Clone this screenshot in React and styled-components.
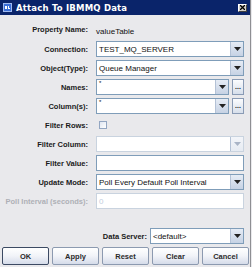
import React from 'react'
import styled, { createGlobalStyle, css } from 'styled-components'

const GlobalStyle = createGlobalStyle`
  html, body {
    margin: 0;
    padding: 0;
    background: #e9e9ec;
  }
  body {
    font-family: "Liberation Sans", Arial, sans-serif;
  }
`

const rows = [
  { label: 'Connection:', kind: 'combo', value: 'TEST_MQ_SERVER' },
  { label: 'Object(Type):', kind: 'combo', value: 'Queue Manager' },
  { label: 'Names:', kind: 'combo', value: '*', browse: true },
  { label: 'Column(s):', kind: 'combo', value: '*', browse: true },
  { label: 'Filter Rows:', kind: 'check' },
  { label: 'Filter Column:', kind: 'combo', value: '', disabled: true },
  { label: 'Filter Value:', kind: 'text', value: '' },
  { label: 'Update Mode:', kind: 'combo', value: 'Poll Every Default Poll Interval' },
  { label: 'Poll Interval (seconds):', kind: 'text', value: '0', disabled: true, labelDisabled: true },
]

const buttons = ['OK', 'Apply', 'Reset', 'Clear', 'Cancel']

const ArrowIcon = ({ disabled }) => (
  <svg width="7" height="4" viewBox="0 0 7 4">
    <path d="M0 0h7L3.5 4z" fill={disabled ? '#a9b4c6' : '#222'} />
  </svg>
)

const Combo = ({ value, disabled, small }) => (
  <ComboBox $disabled={disabled}>
    <ComboText $small={small}>{value}</ComboText>
    <ArrowButton $disabled={disabled}>
      <ArrowIcon disabled={disabled} />
    </ArrowButton>
  </ComboBox>
)

const App = () => {
  return (
    <Window>
      <GlobalStyle />
      <TitleBar>
        <AppIcon>
          <svg width="9" height="9" viewBox="0 0 9 9">
            <rect x="0.5" y="0.5" width="8" height="8" fill="#3a6fd8" stroke="#9fb9ef" />
            <rect x="2" y="3" width="2" height="3" fill="#fff" />
            <rect x="5" y="3" width="1" height="3" fill="#fff" />
            <rect x="5" y="5" width="2" height="1" fill="#fff" />
          </svg>
        </AppIcon>
        <Title>Attach To IBMMQ Data</Title>
        <CloseButton>
          <svg width="5" height="5" viewBox="0 0 5 5">
            <path d="M0 0L5 5M5 0L0 5" stroke="#000" strokeWidth="1.3" />
          </svg>
        </CloseButton>
      </TitleBar>

      <Form>
        <Label $short>Property Name:</Label>
        <PlainValue>valueTable</PlainValue>

        {rows.map((row) => (
          <React.Fragment key={row.label}>
            <Label $disabled={row.labelDisabled}>{row.label}</Label>
            {row.kind === 'combo' && (
              <FieldLine>
                <Combo value={row.value} disabled={row.disabled} small={row.browse} />
                {row.browse && <BrowseButton>...</BrowseButton>}
              </FieldLine>
            )}
            {row.kind === 'text' && (
              <TextBox $disabled={row.disabled}>{row.value}</TextBox>
            )}
            {row.kind === 'check' && (
              <FieldLine>
                <CheckBox />
              </FieldLine>
            )}
          </React.Fragment>
        ))}
      </Form>

      <ServerRow>
        <Label>Data Server:</Label>
        <ServerCombo>
          <Combo value="<default>" />
        </ServerCombo>
      </ServerRow>

      <ButtonBar>
        {buttons.map((b) => (
          <DialogButton key={b} $primary={b === 'OK'}>{b}</DialogButton>
        ))}
      </ButtonBar>
    </Window>
  )
}

export default App

const Window = styled.div`
  width: 251px;
  height: 267px;
  display: flex;
  flex-direction: column;
  background: #e9e9ec;
  border-right: 1px solid #8e8f93;
  box-sizing: border-box;
`

const TitleBar = styled.div`
  height: 15px;
  display: flex;
  align-items: center;
  gap: 4px;
  padding: 0 3px 0 3px;
  background: #0a246a;
  flex-shrink: 0;
`

const AppIcon = styled.div`
  display: flex;
  width: 9px;
  height: 9px;
`

const Title = styled.span`
  flex: 1;
  color: #fff;
  font-family: "DejaVu Sans", Verdana, sans-serif;
  font-weight: bold;
  font-size: 8.5px;
  letter-spacing: 0.2px;
  white-space: nowrap;
`

const CloseButton = styled.div`
  width: 9px;
  height: 8px;
  display: flex;
  align-items: center;
  justify-content: center;
  background: #d4d0c8;
  border: 1px solid;
  border-color: #fff #404040 #404040 #fff;
  box-sizing: border-box;
`

const Form = styled.div`
  display: grid;
  grid-template-columns: 88px 1fr;
  grid-template-rows: 13px;
  grid-auto-rows: 16px;
  column-gap: 8px;
  row-gap: 3px;
  padding: 10px 6px 0 0;
`

const Label = styled.div`
  display: flex;
  align-items: center;
  justify-content: flex-end;
  font-weight: bold;
  font-size: 7.5px;
  white-space: nowrap;
  color: ${({ $disabled }) => ($disabled ? '#aeb0b6' : '#1a1a1a')};
  ${({ $short }) =>
    $short &&
    css`
      align-self: start;
    `}
`

const PlainValue = styled.div`
  display: flex;
  align-items: center;
  font-size: 8px;
  color: #111;
`

const FieldLine = styled.div`
  display: flex;
  align-items: stretch;
  gap: 3px;
`

const boxBase = css`
  box-sizing: border-box;
  border: 1px solid #7f9db9;
  background: #fff;
  font-size: 8px;
  color: #111;
`

const ComboBox = styled.div`
  ${boxBase}
  flex: 1;
  height: 16px;
  display: flex;
  align-items: stretch;
  border-color: ${({ $disabled }) => ($disabled ? '#c9d3df' : '#7f9db9')};
`

const ComboText = styled.div`
  flex: 1;
  display: flex;
  align-items: ${({ $small }) => ($small ? 'flex-start' : 'center')};
  padding-left: 2px;
  font-size: ${({ $small }) => ($small ? '6px' : '8px')};
  white-space: nowrap;
  overflow: hidden;
`

const ArrowButton = styled.div`
  width: 12px;
  display: flex;
  align-items: center;
  justify-content: center;
  border-left: 1px solid #b4c2d6;
  background: ${({ $disabled }) =>
    $disabled
      ? 'linear-gradient(#f3f5f9, #e6ebf2)'
      : 'linear-gradient(#e6ecf5, #c6d2e4)'};
`

const BrowseButton = styled.div`
  width: 12px;
  box-sizing: border-box;
  border: 1px solid #8a9bb5;
  background: linear-gradient(#fbfcfe, #d7dfeb);
  display: flex;
  align-items: center;
  justify-content: center;
  font-size: 7px;
  font-weight: bold;
  line-height: 1;
  color: #222;
  padding-bottom: 2px;
`

const TextBox = styled.div`
  ${boxBase}
  height: 16px;
  display: flex;
  align-items: center;
  padding-left: 2px;
  border-color: ${({ $disabled }) => ($disabled ? '#c9d3df' : '#7f9db9')};
  color: ${({ $disabled }) => ($disabled ? '#c3cede' : '#111')};
`

const CheckBox = styled.div`
  width: 8px;
  height: 8px;
  margin: 4px 0 0 3px;
  box-sizing: border-box;
  border: 1px solid #93a6c2;
  background: linear-gradient(135deg, #dfe6f1, #ffffff);
`

const ServerRow = styled.div`
  display: flex;
  justify-content: flex-end;
  gap: 3px;
  height: 16px;
  margin-top: 19px;
  padding-right: 6px;
`

const ServerCombo = styled.div`
  width: 94px;
  display: flex;
`

const ButtonBar = styled.div`
  display: flex;
  gap: 3px;
  margin-top: 3px;
  padding-left: 2px;
`

const DialogButton = styled.div`
  width: 47px;
  height: 18px;
  box-sizing: border-box;
  display: flex;
  align-items: center;
  justify-content: center;
  border: 1px solid ${({ $primary }) => ($primary ? '#3c4a63' : '#8c9ab0')};
  border-radius: 2px;
  background: linear-gradient(#ffffff 0%, #f1f3f8 50%, #d5dcea 100%);
  font-weight: bold;
  font-size: 7.5px;
  color: #2a2a2a;
`
